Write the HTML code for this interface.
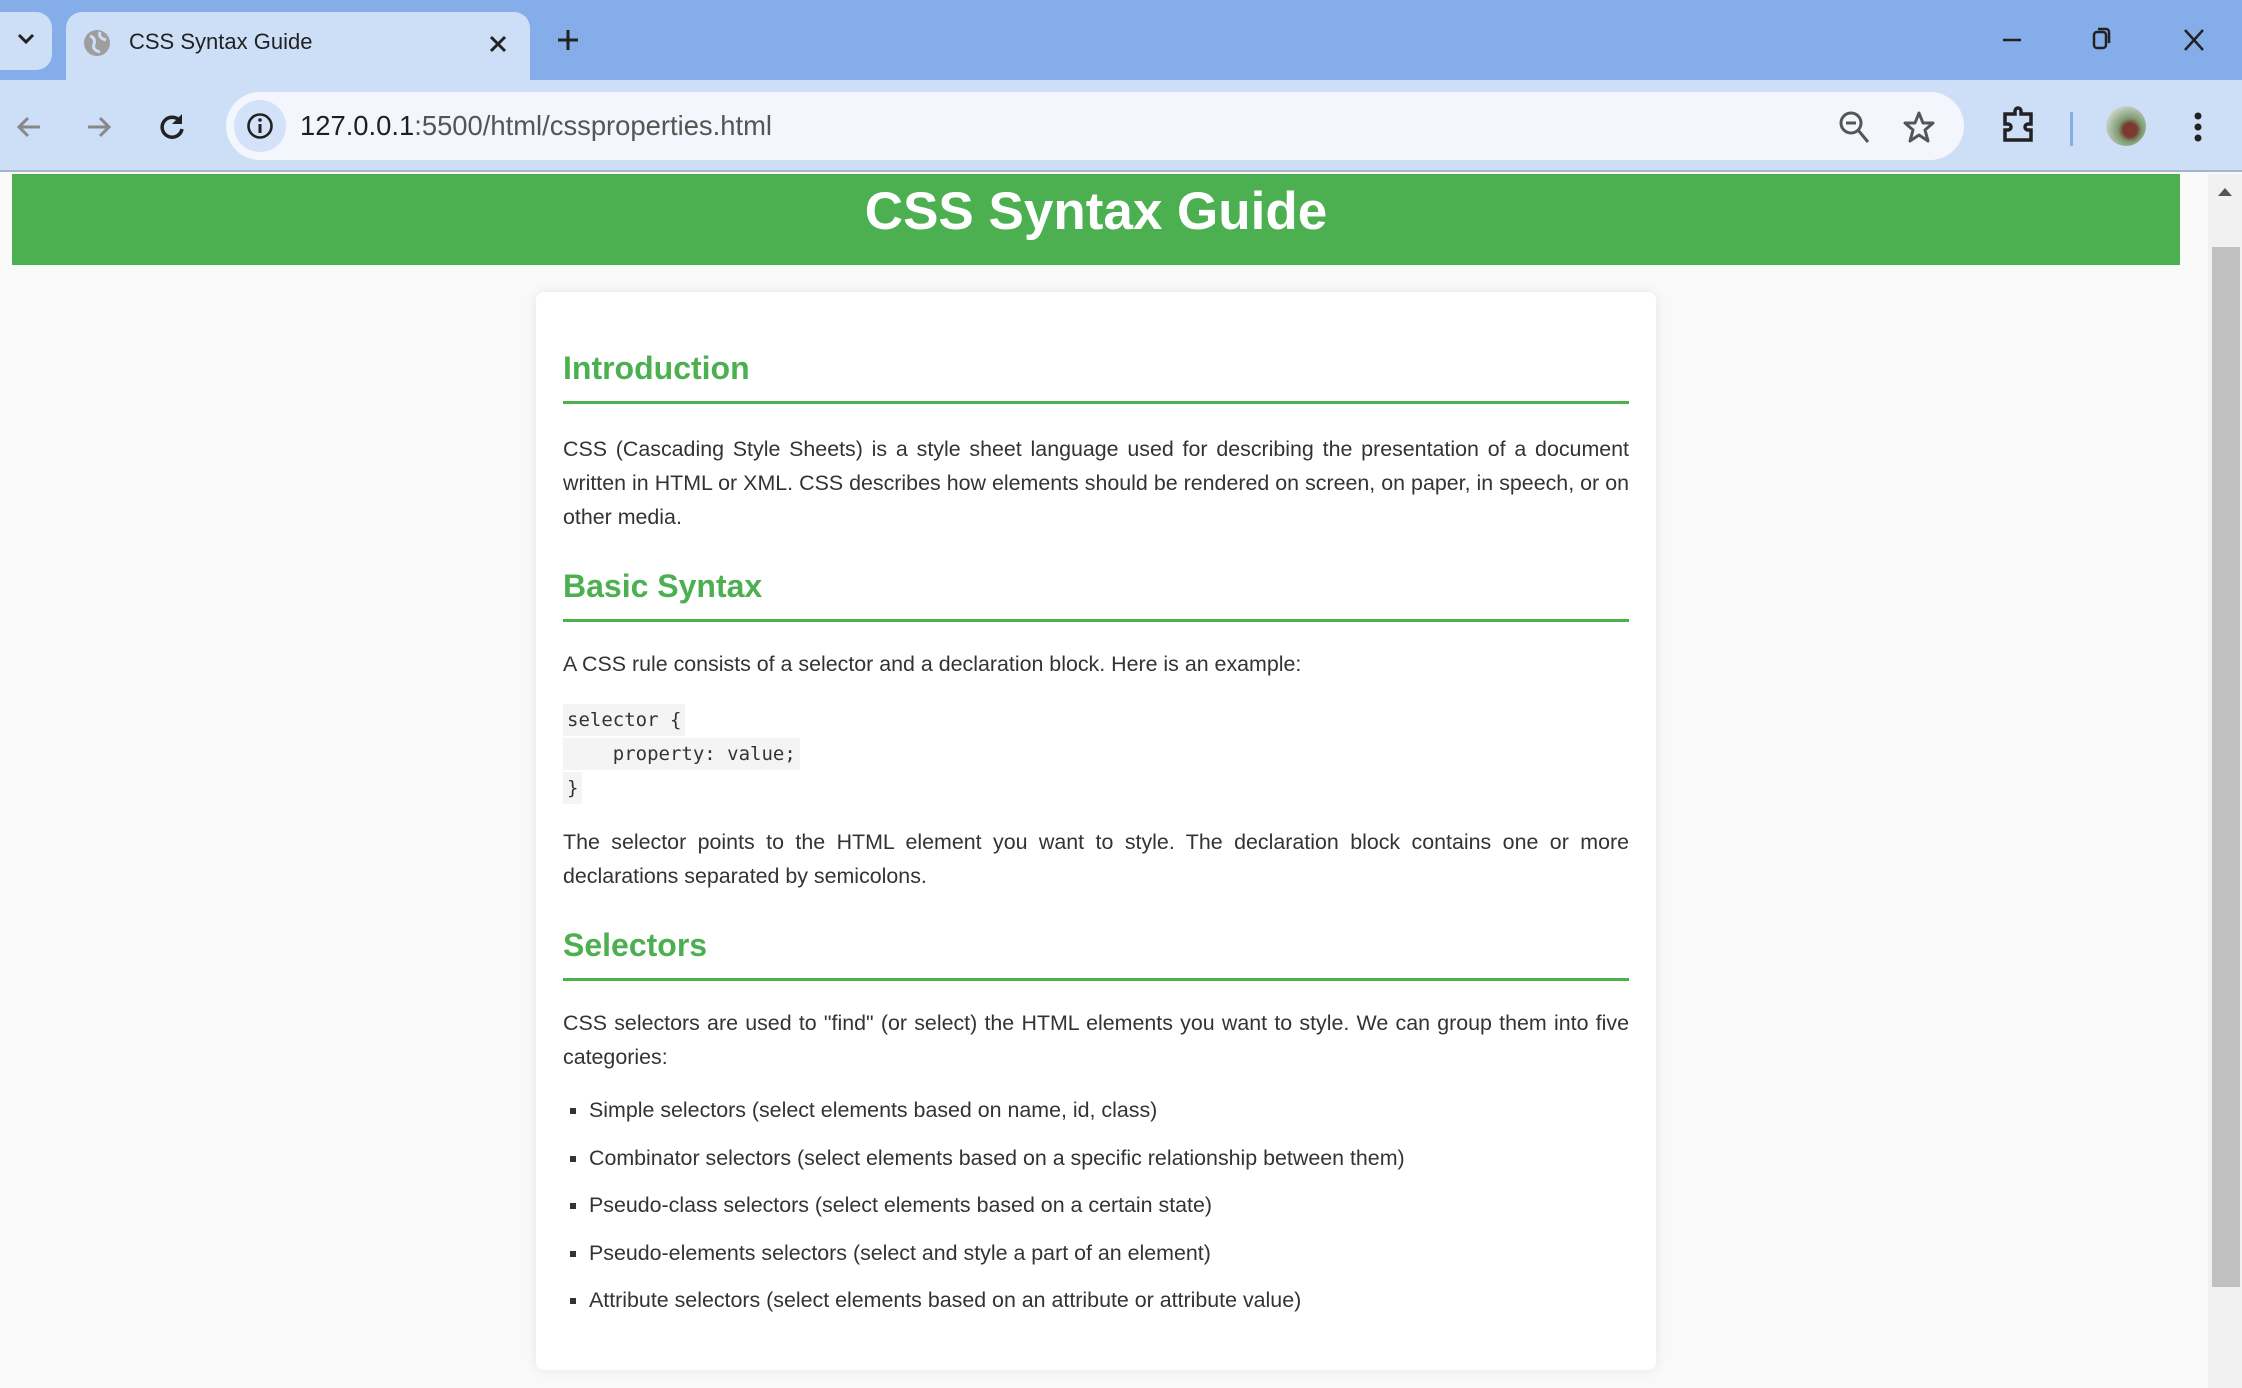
<!DOCTYPE html>
<html><head><meta charset="utf-8"><style>
*{box-sizing:border-box;margin:0;padding:0}
body{width:2242px;height:1388px;overflow:hidden;background:#f9f9f9;font-family:"Liberation Sans",Arial,sans-serif;position:relative}
.tabbar{position:absolute;left:0;top:0;width:2242px;height:80px;background:#85adea}
.tab{position:absolute;left:66px;top:12px;width:464px;height:68px;background:#cddff7;border-radius:16px 16px 0 0}
.tab .t{position:absolute;left:63px;top:17px;font-size:22px;color:#222}
.toolbar{position:absolute;left:0;top:80px;width:2242px;height:92px;background:#cddff7;border-bottom:2px solid #a9b4c8}
.omni{position:absolute;left:226px;top:12px;width:1738px;height:68px;background:#f3f7fd;border-radius:34px}
.url{position:absolute;left:74px;top:18px;font-size:27.4px;color:#1f1f1f}
.url span{color:#555}
.header{position:absolute;left:12px;top:174px;width:2168px;height:91px;background:#4caf50;color:#fff;text-align:center;font-weight:bold;font-size:53px;line-height:76px}
.sb{position:absolute;left:2208px;top:174px;width:34px;height:1214px;background:#f1f1f1}
.sb .th{position:absolute;left:4px;top:73px;width:28px;height:1040px;background:#c1c1c1}
.card{position:absolute;left:536px;top:292px;width:1120px;height:1078px;background:#fff;border-radius:8px;box-shadow:0 0 12px rgba(0,0,0,.08);padding:0 27px}
h2{color:#4caf50;font-size:32px;font-weight:bold;padding-bottom:14px;border-bottom:3px solid #4caf50;margin-bottom:25px}
p{font-size:21.4px;line-height:34px;color:#333;text-align:justify}
pre{font-family:"DejaVu Sans Mono","Liberation Mono",monospace;font-size:19px;line-height:34px;color:#333;margin:22px 0 20px}
pre span{background:#f4f4f4;padding:5px 4px}
ul{list-style:square;padding-left:26px;margin-top:19px}
li{font-size:21.4px;color:#333;height:47.6px;line-height:34px}
</style></head><body>
<div class="tabbar">
 <div style="position:absolute;left:0;top:12px;width:52px;height:58px;background:#cddff7;border-radius:0 16px 16px 0"></div>
 <svg style="position:absolute;left:16px;top:32px" width="20" height="14"><path d="M3 3l7 7 7-7" stroke="#222" stroke-width="3" fill="none"/></svg>
 <div class="tab"><svg style="position:absolute;left:16px;top:16px" width="30" height="30"><circle cx="15" cy="15" r="13" fill="#9e9e9e"/><path d="M8 8q6 2 4 8t6 8M18 4q-2 6 6 8" stroke="#cddff7" stroke-width="3" fill="none"/></svg><div class="t">CSS Syntax Guide</div>
 <svg style="position:absolute;left:422px;top:22px" width="20" height="20"><path d="M3 3l14 14M17 3L3 17" stroke="#222" stroke-width="3"/></svg></div>
 <svg style="position:absolute;left:556px;top:28px" width="24" height="24"><path d="M12 2v20M2 12h20" stroke="#222" stroke-width="3"/></svg>
 <svg style="position:absolute;left:2000px;top:30px" width="24" height="24"><path d="M3 10h18" stroke="#222" stroke-width="2.5"/></svg>
 <svg style="position:absolute;left:2090px;top:26px" width="24" height="26"><rect x="4" y="6" width="12" height="16" rx="3" stroke="#222" stroke-width="2.5" fill="none"/><path d="M8 3h8a3 3 0 0 1 3 3v11" stroke="#222" stroke-width="2.5" fill="none"/></svg>
 <svg style="position:absolute;left:2182px;top:28px" width="24" height="24"><path d="M3 2l18 20M21 2L3 22" stroke="#222" stroke-width="2.5"/></svg>
</div>
<div class="toolbar">
 <svg style="position:absolute;left:14px;top:32px" width="30" height="30"><path d="M26 15H6M14 6l-9 9 9 9" stroke="#888" stroke-width="3" fill="none"/></svg>
 <svg style="position:absolute;left:84px;top:32px" width="30" height="30"><path d="M4 15h20M16 6l9 9-9 9" stroke="#888" stroke-width="3" fill="none"/></svg>
 <svg style="position:absolute;left:156px;top:31px" width="32" height="32"><path d="M24 10A10 10 0 1 0 26 18" stroke="#222" stroke-width="3.5" fill="none"/><path d="M26 3v10H16z" fill="#222"/></svg>
 <div class="omni">
  <div style="position:absolute;left:8px;top:8px;width:52px;height:52px;border-radius:50%;background:#d3e2f8"></div>
  <svg style="position:absolute;left:20px;top:20px" width="28" height="28"><circle cx="14" cy="14" r="11.5" stroke="#222" stroke-width="2.6" fill="none"/><path d="M14 12v9" stroke="#222" stroke-width="3"/><circle cx="14" cy="8" r="1.8" fill="#222"/></svg>
  <div class="url">127.0.0.1<span>:5500/html/cssproperties.html</span></div>
  <svg style="position:absolute;left:1612px;top:18px" width="34" height="36"><circle cx="13" cy="13" r="10" stroke="#555" stroke-width="3" fill="none"/><path d="M8 13h10M20 20l10 12" stroke="#555" stroke-width="3"/></svg>
  <svg style="position:absolute;left:1676px;top:18px" width="34" height="34"><path d="M17 3l4 10h10l-8 7 3 11-9-6-9 6 3-11-8-7h10z" stroke="#555" stroke-width="3" fill="none" stroke-linejoin="round"/></svg>
 </div>
 <svg style="position:absolute;left:2000px;top:26px" width="36" height="40"><path d="M5 8h10v-3a3 3 0 0 1 6 0v3h10v10h-3a3 3 0 0 0 0 6h3v10H5v-10h3a3 3 0 0 0 0-6H5z" stroke="#222" stroke-width="3.5" fill="none"/></svg>
 <div style="position:absolute;left:2070px;top:32px;width:3px;height:34px;background:#85adea"></div>
 <div style="position:absolute;left:2106px;top:26px;width:40px;height:40px;border-radius:50%;background:radial-gradient(circle at 60% 60%,#7a3a30 0 20%,#7c9a70 35%,#d8dcd8 80%)"></div>
 <svg style="position:absolute;left:2190px;top:30px" width="16" height="34"><circle cx="8" cy="6" r="3.5" fill="#222"/><circle cx="8" cy="17" r="3.5" fill="#222"/><circle cx="8" cy="28" r="3.5" fill="#222"/></svg>
</div>
<div class="header">CSS Syntax Guide</div>
<div class="sb"><div class="th"></div><svg style="position:absolute;left:8px;top:12px" width="18" height="12"><path d="M2 10l7-8 7 8z" fill="#555"/></svg></div>
<div class="card">
 <h2 style="margin-top:58px;margin-bottom:28px">Introduction</h2>
 <p>CSS (Cascading Style Sheets) is a style sheet language used for describing the presentation of a document written in HTML or XML. CSS describes how elements should be rendered on screen, on paper, in speech, or on other media.</p>
 <h2 style="margin-top:34px">Basic Syntax</h2>
 <p>A CSS rule consists of a selector and a declaration block. Here is an example:</p>
 <pre><span>selector {</span>
<span>    property: value;</span>
<span>}</span></pre>
 <p>The selector points to the HTML element you want to style. The declaration block contains one or more declarations separated by semicolons.</p>
 <h2 style="margin-top:34px">Selectors</h2>
 <p>CSS selectors are used to "find" (or select) the HTML elements you want to style. We can group them into five categories:</p>
 <ul>
  <li>Simple selectors (select elements based on name, id, class)</li>
  <li>Combinator selectors (select elements based on a specific relationship between them)</li>
  <li>Pseudo-class selectors (select elements based on a certain state)</li>
  <li>Pseudo-elements selectors (select and style a part of an element)</li>
  <li>Attribute selectors (select elements based on an attribute or attribute value)</li>
 </ul>
</div>
</body></html>
